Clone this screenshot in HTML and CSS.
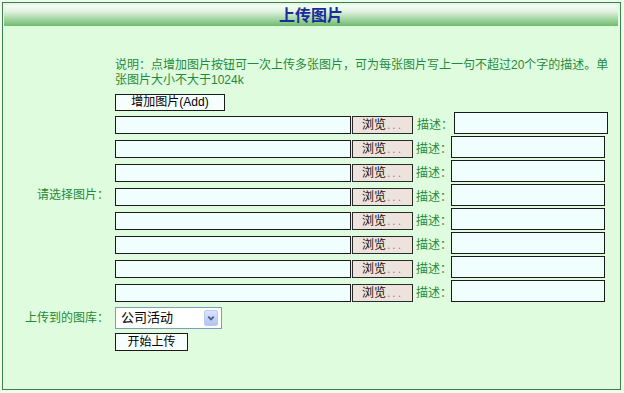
FILE: index.html
```html
<!DOCTYPE html>
<html lang="zh-CN">
<head>
<meta charset="utf-8">
<title>上传图片</title>
<link rel="stylesheet" href="styles.css">
</head>
<body>
<div class="panel">
  <div class="title">上传图片</div>
  <div class="form">
    <div class="note">说明：点增加图片按钮可一次上传多张图片，可为每张图片写上一句不超过20个字的描述。单张图片大小不大于1024k</div>

    <div class="label label-pick">请选择图片：</div>
    <div class="pick">
      <button class="btn btn-add" type="button">增加图片(Add)</button>
      <div class="row first">
        <input class="file" type="text"><button class="browse" type="button">浏览<span class="dots">...</span></button><span class="desc-label">描述：</span><input class="desc" type="text">
      </div>
      <div class="row">
        <input class="file" type="text"><button class="browse" type="button">浏览<span class="dots">...</span></button><span class="desc-label">描述：</span><input class="desc" type="text">
      </div>
      <div class="row">
        <input class="file" type="text"><button class="browse" type="button">浏览<span class="dots">...</span></button><span class="desc-label">描述：</span><input class="desc" type="text">
      </div>
      <div class="row">
        <input class="file" type="text"><button class="browse" type="button">浏览<span class="dots">...</span></button><span class="desc-label">描述：</span><input class="desc" type="text">
      </div>
      <div class="row">
        <input class="file" type="text"><button class="browse" type="button">浏览<span class="dots">...</span></button><span class="desc-label">描述：</span><input class="desc" type="text">
      </div>
      <div class="row">
        <input class="file" type="text"><button class="browse" type="button">浏览<span class="dots">...</span></button><span class="desc-label">描述：</span><input class="desc" type="text">
      </div>
      <div class="row">
        <input class="file" type="text"><button class="browse" type="button">浏览<span class="dots">...</span></button><span class="desc-label">描述：</span><input class="desc" type="text">
      </div>
      <div class="row">
        <input class="file" type="text"><button class="browse" type="button">浏览<span class="dots">...</span></button><span class="desc-label">描述：</span><input class="desc" type="text">
      </div>
    </div>

    <div class="label label-lib">上传到的图库：</div>
    <div class="select">
      <span class="select-text">公司活动</span>
      <span class="select-arrow">
        <svg width="13" height="15" viewBox="0 0 13 15">
          <path d="M3.5 5.5 L6.5 8.5 L9.5 5.5" fill="none" stroke="#4d6185" stroke-width="2"/>
        </svg>
      </span>
    </div>

    <div class="submit-cell">
      <button class="btn btn-submit" type="button">开始上传</button>
    </div>
  </div>
</div>
</body>
</html>
```

FILE: styles.css
```css
html, body {
  margin: 0;
  padding: 0;
}

body {
  background: #eefdee;
  font-family: "Liberation Sans", "Noto Sans CJK SC", sans-serif;
  font-size: 12px;
  color: #000;
}

.panel {
  box-sizing: border-box;
  margin: 2px;
  width: 619px;
  height: 388px;
  border: 1px solid #3f7f4f;
  background: #dffcdf;
  padding-top: 2px;
}

.title {
  margin: 0 2px 0 1px;
  height: 21px;
  line-height: 21px;
  text-align: center;
  font-size: 16px;
  font-weight: bold;
  color: #1a2c98;
  background: linear-gradient(to bottom, #f7fcf7 0%, #e2f3e2 30%, #a6d8a6 65%, #6fbb6f 100%);
}

.form {
  display: grid;
  grid-template-columns: 106px auto;
  column-gap: 6px;
  margin-top: 32px;
  justify-content: start;
}

.note {
  grid-column: 2;
  grid-row: 1;
  width: 500px;
  line-height: 15px;
  color: #1f8a3a;
}

.label {
  grid-column: 1;
  text-align: right;
  color: #1f8a3a;
  line-height: 15px;
  align-self: center;
  white-space: nowrap;
}

.label-pick {
  grid-row: 2;
}

.label-lib {
  grid-row: 3;
  margin-top: 5px;
}

.pick {
  grid-column: 2;
  grid-row: 2;
  display: flex;
  flex-direction: column;
  align-items: flex-start;
  gap: 2px;
}

.btn {
  box-sizing: border-box;
  margin: 0;
  padding: 0;
  border: 1px solid #1a1a1a;
  background: #f6fffd;
  font-family: inherit;
  font-size: 12px;
  color: #000;
  line-height: 15px;
}

.btn-add {
  width: 110px;
  height: 17px;
  margin-top: 6px;
  margin-bottom: -1px;
}

.row {
  display: flex;
  align-items: flex-end;
  height: 22px;
}

.file {
  box-sizing: border-box;
  width: 236px;
  height: 18px;
  margin: 0;
  padding: 0 2px;
  border: 1px solid #1a1a1a;
  background: #f0fffe;
  font-family: inherit;
  font-size: 12px;
}

.browse {
  box-sizing: border-box;
  width: 61px;
  height: 18px;
  margin: 0 0 0 1px;
  padding: 0;
  border: 1px solid #2a2a2a;
  background: #ede3dc;
  font-family: inherit;
  font-size: 12px;
  color: #111;
  line-height: 15px;
}

.dots {
  color: #8a8a8a;
  letter-spacing: 2px;
  margin-left: 1px;
}

.desc-label {
  width: 35px;
  margin-left: 3px;
  color: #1f8a3a;
  line-height: 17px;
  white-space: nowrap;
  overflow: visible;
}

.row.first .desc-label {
  width: 37px;
  margin-left: 4px;
}

.desc {
  box-sizing: border-box;
  width: 154px;
  height: 22px;
  margin: 0;
  padding: 0 2px;
  border: 1px solid #1a1a1a;
  background: #f0fffe;
  font-family: inherit;
  font-size: 12px;
}

.select {
  grid-column: 2;
  grid-row: 3;
  margin-top: 5px;
  box-sizing: border-box;
  width: 107px;
  height: 22px;
  border: 1px solid #7f9db9;
  background: #ffffff;
  display: flex;
  align-items: center;
  justify-content: space-between;
  padding: 0 3px 0 5px;
}

.select-text {
  font-size: 13px;
  color: #000;
  line-height: 16px;
}

.select-arrow {
  display: flex;
  box-sizing: border-box;
  width: 14px;
  height: 16px;
  border: 1px solid #b9cbf3;
  border-radius: 2px;
  background: linear-gradient(to bottom, #dbe5fd 0%, #c3d4fa 50%, #b1c5f3 100%);
  align-items: center;
  justify-content: center;
}

.submit-cell {
  grid-column: 2;
  grid-row: 4;
  margin-top: 4px;
}

.btn-submit {
  width: 73px;
  height: 18px;
  display: block;
}
```
